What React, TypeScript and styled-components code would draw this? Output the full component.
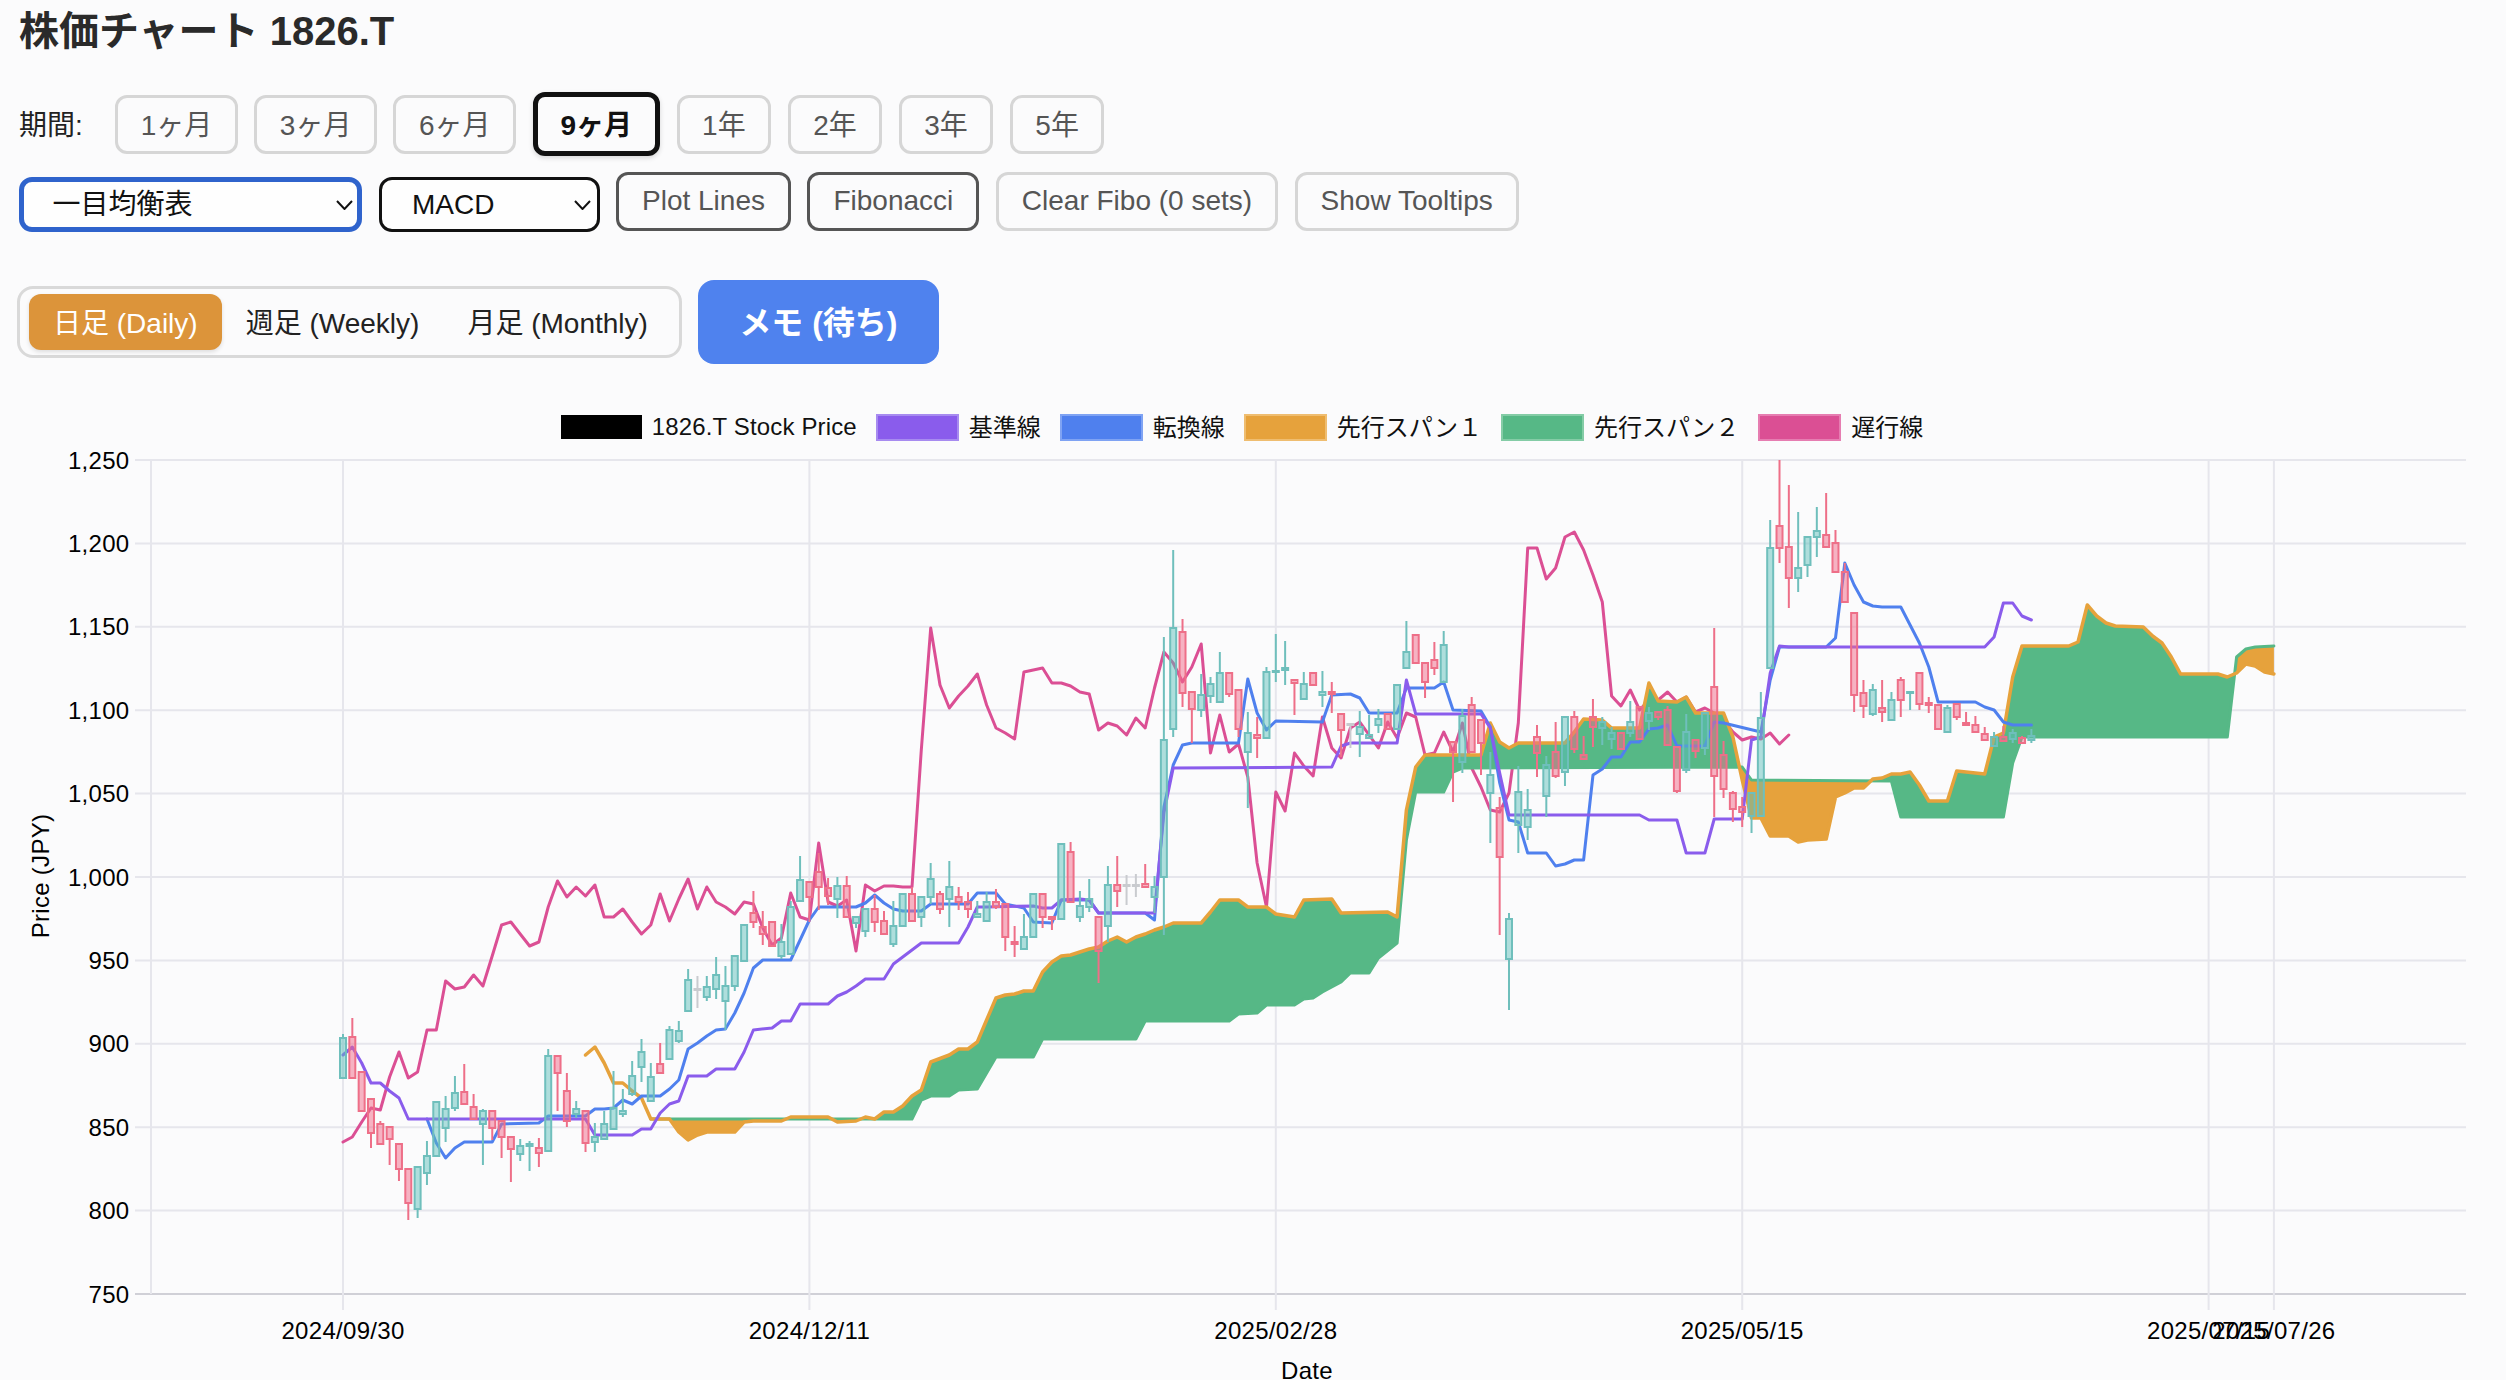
import React from 'react';
import styled, { createGlobalStyle } from 'styled-components';

const FONT = `"Liberation Sans", "Noto Sans CJK JP", sans-serif`;

const GlobalStyle = createGlobalStyle`
  html, body {
    margin: 0;
    height: 1380px;
    overflow: hidden;
    background: #fbfbfc;
    font-family: ${FONT};
  }
`;

const Page = styled.div`
  width: 2506px;
  height: 1380px;
  overflow: hidden;
`;

const Controls = styled.section`
  padding-left: 19px;
`;

const Title = styled.h1`
  margin: 0;
  height: 60px;
  font-size: 40px;
  line-height: 62px;
  font-weight: 700;
  color: #2a2a2a;
`;

const PeriodRow = styled.div`
  display: flex;
  align-items: center;
  gap: 16.5px;
  height: 64px;
  margin-top: 32px;
`;

const PeriodLabel = styled.span`
  font-size: 28px;
  color: #222;
  margin-right: 16px;
  padding-bottom: 3px;
`;

const Button = styled.button<{ $active?: boolean; $strong?: boolean }>`
  box-sizing: border-box;
  height: ${(p) => (p.$active ? '64px' : '59px')};
  padding: 0 ${(p) => (p.$active ? '23px' : '22.5px')} 3px;
  background: transparent;
  border: ${(p) => (p.$active ? '5px solid #111' : p.$strong ? '3px solid #555' : '3px solid #d6d6d6')};
  border-radius: 12px;
  box-shadow: ${(p) => (p.$active ? '0 2px 5px rgba(0,0,0,.15)' : 'none')};
  font-family: ${FONT};
  font-size: 28px;
  font-weight: ${(p) => (p.$active ? 700 : 400)};
  color: ${(p) => (p.$active ? '#111' : '#555')};
  white-space: nowrap;
`;

const ToolButton = styled(Button)`
  padding: 0 23px 2px;
`;

const ToolRow = styled.div`
  display: flex;
  align-items: flex-start;
  gap: 16.5px;
  height: 60px;
  margin-top: 16px;
`;

const SelectWrap = styled.div<{ $width: number }>`
  position: relative;
  width: ${(p) => p.$width}px;
  height: 55px;
  margin-top: 5px;
`;

const Select = styled.select<{ $focused?: boolean }>`
  appearance: none;
  box-sizing: border-box;
  width: 100%;
  height: 100%;
  padding: 0 0 0 ${(p) => (p.$focused ? '28.5px' : '30.5px')};
  background: #fefefe;
  border: ${(p) => (p.$focused ? '5px solid #2f63cc' : '3px solid #111')};
  border-radius: 13px;
  font-family: ${FONT};
  font-size: 28px;
  color: #111;
  outline: none;
`;

const Chevron = styled.svg`
  position: absolute;
  top: 23px;
  right: 9px;
  pointer-events: none;
`;

const ChartModeRow = styled.div`
  display: flex;
  align-items: center;
  gap: 16px;
  height: 84px;
  margin: 48px 0 0 -2px;
`;

const Segment = styled.div`
  box-sizing: border-box;
  display: flex;
  height: 72px;
  padding: 5px 7px 5px 9px;
  border: 3px solid #d9d9d9;
  border-radius: 16px;
`;

const SegmentOption = styled.div<{ $active?: boolean }>`
  display: flex;
  align-items: center;
  padding: 0 24px 3px;
  border-radius: 12px;
  background: ${(p) => (p.$active ? '#dc943a' : 'transparent')};
  box-shadow: ${(p) => (p.$active ? '0 2px 4px rgba(0,0,0,.12)' : 'none')};
  font-size: 28px;
  color: ${(p) => (p.$active ? '#fff' : '#222')};
  white-space: nowrap;
`;

const MemoButton = styled.button`
  width: 241px;
  height: 84px;
  padding: 0 0 5px;
  border: none;
  border-radius: 16px;
  background: #4f82ee;
  font-family: ${FONT};
  font-size: 32px;
  font-weight: 700;
  color: #fff;
`;

const Legend = styled.div`
  display: flex;
  align-items: center;
  justify-content: center;
  gap: 19px;
  width: 2484px;
  height: 28px;
  margin-top: 49px;
  margin-bottom: 1px;
`;

const LegendItem = styled.div`
  display: flex;
  align-items: center;
  gap: 10px;
  font-size: 24px;
  color: #111;
  white-space: nowrap;
`;

const LegendText = styled.span<{ $latin?: boolean }>`
  padding-bottom: ${(p) => (p.$latin ? '0' : '3px')};
  letter-spacing: ${(p) => (p.$latin ? '0.15px' : '0')};
`;

const Swatch = styled.span<{ $fill: string; $edge: string }>`
  box-sizing: border-box;
  width: ${(p) => (p.$fill === '#000000' ? '81px' : '83px')};
  height: ${(p) => (p.$fill === '#000000' ? '24px' : '27px')};
  background: ${(p) => p.$fill};
  border: 2px solid ${(p) => p.$edge};
`;

const ChartSvg = styled.svg`
  display: block;
`;

const AxisText = styled.text`
  font-family: ${FONT};
  font-size: 24px;
  letter-spacing: 0.3px;
  fill: #000;
  dominant-baseline: central;
`;

const GridLine = styled.line<{ $axis?: boolean }>`
  stroke: ${(p) => (p.$axis ? '#d0d0d7' : '#e6e6ec')};
  stroke-width: 2;
`;

const SeriesLine = styled.path<{ $color: string; $width?: number }>`
  fill: none;
  stroke: ${(p) => p.$color};
  stroke-width: ${(p) => p.$width ?? 3};
  stroke-linejoin: round;
  stroke-linecap: round;
`;

const PLOT = { left: 151, right: 2466, top: 460, bottom: 1294 };
const ix = (i: number) => 343 + i * 9.328;

const COLORS = {
  kijun: '#8a5cec',
  tenkan: '#4f80ee',
  span1: '#e6a23c',
  span2: '#56b886',
  chikou: '#db4f94',
};

type Knot = [number, number];

const CHIKOU: number[] = [
  1142, 1137, 1122, 1108, 1110, 1077, 1052, 1078, 1072, 1030, 1030, 981, 989, 987, 975, 986, 956, 925, 922, 934,
  946, 942, 907, 881, 897, 887, 896, 885, 917, 917, 909, 922, 934, 925, 894, 921, 899, 879, 909, 887,
  902, 907, 914, 902, 904, 928, 945, 938, 893, 917, 920, 843, 902, 906, 900, 951, 885, 891, 886, 886,
  887, 887, 750, 628, 685, 708, 696, 686, 674, 705, 728, 733, 739, 672, 670, 668, 683, 683, 686, 692,
  694, 730, 723, 726, 735, 718, 728, 688, 652, 663, 682, 667, 644, 753, 715, 752, 744, 777, 863, 907,
  792, 811, 753, 766, 776, 717, 748, 758, 728, 722, 735, 748, 722, 738, 713, 717, 755, 753, 732, 752,
  723, 768, 787, 810, 812, 793, 723, 548, 548, 579, 568, 537, 532, 550, 575, 602, 696, 706, 690, 710,
  700, 700, 692, 702, 697, 712, 708, 713, 720, 732, 740, 737, 739, 733, 744, 735,
];

const KIJUN: Knot[] = [
  [0, 1055], [1, 1047], [2, 1063], [3, 1083], [4, 1083], [5, 1091], [6, 1098], [7, 1119], [26, 1119], [27, 1135],
  [31, 1135], [32, 1129], [33, 1129], [34, 1113], [35, 1104], [36, 1101], [37, 1076], [39, 1076], [40, 1069], [42, 1069],
  [43, 1052], [44, 1030], [46, 1028], [47, 1021], [48, 1021], [49, 1004], [52, 1004], [53, 996], [54, 992], [55, 986],
  [56, 979], [58, 979], [59, 964], [60, 957], [61, 950], [62, 943], [66, 943], [67, 927], [68, 907], [69, 907],
  [74, 906], [75, 908], [76, 908], [77, 900], [79, 899], [80, 900], [81, 913], [87, 913], [88, 813], [89, 768],
  [106, 767], [107, 746], [108, 743], [113, 743], [114, 680], [115, 714], [122, 714], [123, 728], [124, 773], [125, 815],
  [139, 815], [140, 820], [143, 820], [144, 853], [146, 853], [147, 819], [150, 819], [151, 740], [152, 737], [153, 673],
  [154, 646], [155, 647], [176, 647], [177, 637], [178, 603], [179, 603], [180, 616], [181, 620],
];

const TENKAN: Knot[] = [
  [9, 1119], [10, 1143], [11, 1158], [12, 1148], [13, 1142], [16, 1142], [17, 1124], [21, 1123], [22, 1116], [26, 1116],
  [27, 1109], [28, 1109], [29, 1108], [30, 1100], [31, 1104], [32, 1096], [34, 1096], [35, 1089], [36, 1080], [37, 1049],
  [38, 1043], [39, 1036], [40, 1030], [41, 1029], [42, 1013], [43, 993], [44, 968], [45, 960], [48, 960], [49, 940],
  [50, 920], [51, 907], [55, 907], [56, 903], [57, 895], [58, 903], [59, 909], [60, 911], [62, 911], [63, 904],
  [67, 904], [68, 893], [70, 893], [71, 904], [73, 908], [74, 922], [76, 923], [77, 900], [80, 900], [81, 913],
  [86, 913], [87, 920], [88, 807], [89, 765], [90, 745], [91, 743], [96, 743], [97, 679], [98, 713], [99, 730],
  [100, 721], [105, 722], [106, 695], [108, 694], [109, 698], [110, 713], [113, 713], [114, 688], [117, 688], [118, 682],
  [119, 710], [122, 711], [123, 727], [124, 783], [125, 820], [126, 822], [127, 853], [129, 853], [130, 866], [131, 864],
  [132, 860], [133, 860], [134, 775], [135, 769], [136, 757], [137, 757], [138, 742], [139, 742], [140, 729], [141, 728],
  [142, 725], [143, 746], [146, 746], [147, 722], [148, 723], [152, 732], [153, 680], [154, 647], [159, 647], [160, 638],
  [161, 563], [162, 585], [163, 602], [164, 606], [165, 607], [167, 607], [168, 625], [169, 643], [170, 667], [171, 702],
  [175, 702], [176, 707], [177, 710], [178, 722], [179, 725], [181, 725],
];

const SPAN1: Knot[] = [
  [26, 1055], [27, 1047], [28, 1063], [29, 1083], [30, 1083], [31, 1091], [32, 1098], [33, 1119], [35, 1119], [36, 1132],
  [37, 1140], [38, 1135], [39, 1132], [42, 1132], [43, 1122], [44, 1121], [47, 1121], [48, 1117], [52, 1117], [53, 1122],
  [55, 1121], [56, 1117], [57, 1119], [58, 1112], [59, 1112], [60, 1106], [61, 1096], [62, 1090], [63, 1062], [65, 1055],
  [66, 1049], [67, 1049], [68, 1042], [69, 1020], [70, 998], [71, 995], [72, 994], [73, 991], [74, 991], [75, 972],
  [76, 962], [77, 956], [78, 955], [79, 952], [80, 949], [81, 947], [82, 941], [83, 937], [84, 942], [85, 937],
  [86, 934], [87, 930], [88, 927], [89, 923], [92, 923], [93, 912], [94, 900], [96, 900], [97, 907], [99, 907],
  [100, 914], [102, 917], [103, 900], [106, 899], [107, 913], [112, 912], [113, 917], [114, 810], [115, 767], [116, 755],
  [122, 755], [123, 723], [124, 742], [125, 748], [126, 743], [131, 743], [132, 732], [133, 719], [135, 720], [136, 728],
  [139, 728], [140, 683], [141, 701], [143, 702], [144, 697], [145, 713], [148, 713], [149, 737], [150, 780], [151, 818],
  [152, 818], [153, 836], [155, 836], [156, 842], [157, 840], [159, 839], [160, 797], [161, 793], [162, 788], [163, 788],
  [164, 779], [165, 778], [166, 774], [167, 774], [168, 772], [169, 785], [170, 801], [172, 801], [173, 771], [175, 773],
  [176, 774], [177, 737], [178, 733], [179, 677], [180, 646], [185, 646], [186, 642], [187, 605], [188, 616], [189, 623],
  [190, 626], [193, 627], [194, 636], [195, 643], [196, 657], [197, 674], [201, 674], [202, 677], [203, 673], [204, 664],
  [205, 666], [206, 672], [207, 674],
];

const SPAN2: Knot[] = [
  [33, 1119], [61, 1119], [62, 1100], [63, 1096], [65, 1096], [66, 1090], [68, 1089], [70, 1057], [74, 1057], [75, 1039],
  [85, 1039], [86, 1021], [95, 1021], [96, 1014], [98, 1013], [99, 1005], [102, 1005], [103, 999], [104, 998], [105, 992],
  [107, 982], [108, 973], [110, 973], [111, 958], [113, 943], [114, 840], [115, 792], [118, 792], [119, 772], [120, 768],
  [150, 767], [151, 780], [166, 781], [167, 817], [178, 817], [179, 763], [180, 737], [202, 737], [203, 657], [204, 649],
  [205, 647], [207, 646],
];

type Kind = 'u' | 'd' | 'n';
type Candle = [number, number, number, number, Kind];

const CANDLES: Candle[] = [
  [1038, 1078, 1034, 1078, 'u'], [1037, 1078, 1018, 1078, 'd'], [1072, 1111, 1072, 1111, 'd'], [1099, 1133, 1099, 1148, 'd'],
  [1124, 1144, 1121, 1144, 'd'], [1127, 1139, 1127, 1165, 'd'], [1144, 1169, 1144, 1181, 'd'], [1169, 1203, 1169, 1220, 'd'],
  [1167, 1209, 1167, 1218, 'u'], [1156, 1173, 1141, 1185, 'u'], [1102, 1156, 1101, 1156, 'u'], [1109, 1128, 1096, 1142, 'u'],
  [1093, 1108, 1076, 1111, 'u'], [1092, 1104, 1064, 1104, 'd'], [1107, 1119, 1094, 1119, 'd'], [1111, 1124, 1109, 1165, 'u'],
  [1111, 1128, 1111, 1140, 'd'], [1121, 1137, 1121, 1158, 'd'], [1137, 1149, 1137, 1182, 'd'], [1146, 1154, 1139, 1161, 'u'],
  [1144, 1146, 1141, 1171, 'u'], [1148, 1153, 1138, 1167, 'd'], [1056, 1151, 1049, 1151, 'u'], [1056, 1073, 1056, 1111, 'd'],
  [1091, 1121, 1073, 1127, 'd'], [1109, 1114, 1101, 1118, 'u'], [1111, 1143, 1111, 1152, 'd'], [1137, 1142, 1123, 1152, 'u'],
  [1124, 1139, 1111, 1139, 'u'], [1108, 1129, 1071, 1129, 'u'], [1111, 1114, 1089, 1117, 'u'], [1076, 1094, 1061, 1096, 'u'],
  [1052, 1067, 1039, 1082, 'u'], [1077, 1101, 1063, 1102, 'u'], [1064, 1073, 1043, 1073, 'd'], [1030, 1059, 1026, 1059, 'u'],
  [1031, 1041, 1021, 1043, 'u'], [980, 1011, 969, 1011, 'u'], [989, 989, 976, 1008, 'n'], [987, 997, 976, 1001, 'u'],
  [975, 989, 957, 999, 'u'], [986, 1001, 966, 1030, 'u'], [956, 986, 956, 991, 'u'], [925, 961, 925, 961, 'u'],
  [913, 922, 891, 928, 'd'], [927, 934, 911, 945, 'd'], [922, 946, 922, 946, 'd'], [942, 956, 924, 959, 'u'],
  [907, 954, 901, 954, 'u'], [880, 901, 856, 901, 'u'], [882, 897, 882, 922, 'd'], [872, 887, 853, 910, 'd'],
  [888, 896, 878, 905, 'd'], [886, 899, 877, 918, 'u'], [886, 917, 876, 917, 'd'], [917, 923, 917, 928, 'u'],
  [909, 931, 909, 937, 'u'], [909, 922, 895, 932, 'd'], [921, 934, 911, 934, 'd'], [926, 944, 901, 947, 'u'],
  [894, 926, 894, 926, 'u'], [894, 921, 887, 921, 'd'], [897, 917, 897, 927, 'u'], [879, 897, 863, 904, 'u'],
  [894, 909, 891, 914, 'd'], [887, 899, 861, 927, 'u'], [897, 902, 887, 910, 'd'], [902, 909, 892, 918, 'd'],
  [914, 917, 901, 918, 'u'], [902, 921, 892, 922, 'u'], [902, 907, 889, 909, 'd'], [904, 937, 904, 951, 'd'],
  [942, 944, 926, 957, 'd'], [937, 949, 914, 949, 'u'], [894, 937, 893, 937, 'u'], [894, 917, 894, 928, 'd'],
  [917, 919, 917, 930, 'd'], [844, 919, 844, 919, 'u'], [852, 902, 842, 902, 'd'], [906, 917, 891, 922, 'u'],
  [899, 907, 879, 912, 'u'], [917, 951, 917, 983, 'd'], [885, 926, 866, 942, 'u'], [885, 891, 856, 907, 'd'],
  [885, 885, 875, 905, 'n'], [885, 885, 874, 897, 'n'], [884, 887, 864, 887, 'd'], [887, 897, 876, 913, 'u'],
  [740, 877, 637, 935, 'u'], [628, 729, 550, 737, 'u'], [632, 693, 619, 707, 'd'], [692, 709, 692, 743, 'd'],
  [695, 710, 674, 717, 'u'], [684, 696, 677, 703, 'u'], [673, 702, 652, 702, 'u'], [673, 694, 673, 697, 'd'],
  [690, 729, 690, 737, 'd'], [733, 752, 712, 808, 'u'], [735, 738, 717, 758, 'd'], [672, 738, 667, 738, 'u'],
  [671, 672, 634, 682, 'u'], [668, 670, 641, 685, 'u'], [680, 683, 680, 715, 'd'], [684, 699, 672, 699, 'u'],
  [673, 685, 673, 685, 'd'], [692, 695, 671, 707, 'u'], [692, 694, 682, 713, 'd'], [714, 730, 714, 757, 'd'],
  [724, 724, 724, 748, 'n'], [727, 734, 711, 757, 'u'], [735, 738, 715, 738, 'u'], [719, 725, 709, 733, 'u'],
  [714, 729, 714, 729, 'd'], [685, 729, 685, 729, 'u'], [652, 668, 621, 668, 'u'], [635, 663, 635, 663, 'd'],
  [663, 682, 663, 698, 'd'], [660, 668, 642, 675, 'd'], [645, 682, 631, 682, 'u'], [742, 752, 742, 802, 'd'],
  [716, 762, 709, 773, 'u'], [705, 752, 697, 752, 'd'], [720, 743, 720, 775, 'd'], [775, 793, 752, 843, 'u'],
  [808, 857, 797, 935, 'd'], [919, 959, 913, 1010, 'u'], [792, 825, 766, 853, 'u'], [810, 827, 789, 840, 'u'],
  [737, 753, 725, 777, 'd'], [765, 796, 756, 817, 'u'], [752, 776, 722, 778, 'd'], [717, 772, 717, 786, 'u'],
  [717, 749, 711, 753, 'd'], [755, 759, 736, 759, 'd'], [717, 727, 699, 747, 'd'], [722, 728, 717, 745, 'u'],
  [733, 739, 727, 749, 'u'], [733, 749, 733, 749, 'd'], [722, 733, 701, 737, 'u'], [707, 739, 707, 739, 'd'],
  [713, 721, 707, 730, 'u'], [712, 717, 712, 720, 'd'], [710, 745, 706, 745, 'd'], [747, 791, 747, 793, 'd'],
  [732, 770, 714, 773, 'u'], [740, 751, 740, 758, 'd'], [713, 748, 713, 755, 'u'], [687, 776, 628, 817, 'd'],
  [755, 789, 741, 798, 'd'], [793, 809, 791, 822, 'd'], [807, 812, 797, 827, 'd'], [793, 816, 793, 833, 'u'],
  [718, 816, 692, 816, 'u'], [548, 668, 520, 668, 'u'], [526, 548, 460, 563, 'd'], [547, 578, 485, 608, 'd'],
  [568, 578, 512, 592, 'u'], [537, 565, 537, 577, 'u'], [531, 537, 507, 557, 'u'], [535, 547, 493, 547, 'd'],
  [543, 572, 530, 572, 'd'], [572, 602, 563, 602, 'd'], [613, 695, 613, 712, 'd'], [693, 706, 680, 718, 'd'],
  [690, 714, 684, 716, 'u'], [708, 712, 680, 722, 'd'], [700, 720, 692, 721, 'u'], [680, 700, 677, 717, 'd'],
  [692, 693, 692, 710, 'u'], [673, 704, 673, 710, 'd'], [703, 705, 697, 713, 'd'], [705, 729, 705, 729, 'd'],
  [708, 732, 705, 732, 'u'], [704, 717, 704, 720, 'd'], [723, 725, 712, 725, 'd'], [725, 732, 716, 732, 'd'],
  [734, 740, 727, 740, 'd'], [737, 746, 732, 746, 'u'], [737, 741, 726, 741, 'd'], [733, 739, 729, 743, 'u'],
  [738, 743, 736, 743, 'd'], [736, 740, 729, 743, 'u'],
];

const CANDLE_STYLE: Record<Kind, { fill: string; stroke: string }> = {
  u: { fill: 'rgba(90,190,185,0.48)', stroke: '#6fbfbc' },
  d: { fill: 'rgba(242,105,135,0.5)', stroke: '#ee6f88' },
  n: { fill: 'rgba(201,203,207,0.5)', stroke: '#c9cbcf' },
};

const pathOf = (pts: Knot[]) => pts.map(([i, y], n) => `${n ? 'L' : 'M'}${ix(i).toFixed(1)} ${y}`).join('');

const yAt = (knots: Knot[], i: number) => {
  for (let k = 1; k < knots.length; k++) {
    const [a, ya] = knots[k - 1];
    const [b, yb] = knots[k];
    if (i >= a && i <= b) return ya + ((yb - ya) * (i - a)) / (b - a);
  }
  return knots[knots.length - 1][1];
};

// cloud between the two spans: one polygon per run, split where the spans cross
const cloudRegions = () => {
  const runs: { above: boolean; top: Knot[]; bottom: Knot[] }[] = [];
  let run: { above: boolean; top: Knot[]; bottom: Knot[] } | null = null;
  for (let i = 33; i <= 207; i++) {
    const a = yAt(SPAN1, i);
    const b = yAt(SPAN2, i);
    if (a !== b) {
      const above = a < b;
      if (!run || run.above !== above) {
        let start = i;
        if (i > 33) {
          const pa = yAt(SPAN1, i - 1);
          const pb = yAt(SPAN2, i - 1);
          start = i - 1 + (pa - pb) / (pa - pb - (a - b));
          if (run) {
            run.top.push([start, yAt(SPAN1, start)]);
            run.bottom.push([start, yAt(SPAN1, start)]);
          }
        }
        run = { above, top: [[start, yAt(SPAN1, start)]], bottom: [[start, yAt(SPAN1, start)]] };
        runs.push(run);
      }
    }
    if (run) {
      run.top.push([i, a]);
      run.bottom.push([i, b]);
    }
  }
  return runs.map((r) => ({
    color: r.above ? COLORS.span2 : COLORS.span1,
    d: `${pathOf(r.top)}L${r.bottom
      .slice()
      .reverse()
      .map(([i, y]) => `${ix(i).toFixed(1)} ${y}`)
      .join('L')}Z`,
  }));
};

const PERIODS = ['1ヶ月', '3ヶ月', '6ヶ月', '9ヶ月', '1年', '2年', '3年', '5年'];
const LEGEND = [
  { label: '1826.T Stock Price', fill: '#000000', edge: '#000000', latin: true },
  { label: '基準線', fill: COLORS.kijun, edge: '#a78bf0' },
  { label: '転換線', fill: COLORS.tenkan, edge: '#7fa3f3' },
  { label: '先行スパン１', fill: COLORS.span1, edge: '#efbd70' },
  { label: '先行スパン２', fill: COLORS.span2, edge: '#84cca6' },
  { label: '遅行線', fill: COLORS.chikou, edge: '#e67db1' },
];
const Y_TICKS = ['1,250', '1,200', '1,150', '1,100', '1,050', '1,000', '950', '900', '850', '800', '750'];
const X_TICKS: [number, string][] = [
  [0, '2024/09/30'],
  [50, '2024/12/11'],
  [100, '2025/02/28'],
  [150, '2025/05/15'],
  [200, '2025/07/15'],
  [207, '2025/07/26'],
];

const SelectBox = ({ width, focused, options }: { width: number; focused?: boolean; options: string[] }) => (
  <SelectWrap $width={width}>
    <Select $focused={focused} defaultValue={options[0]}>
      {options.map((o) => (
        <option key={o}>{o}</option>
      ))}
    </Select>
    <Chevron width="17" height="10" viewBox="0 0 17 10">
      <path d="M1 1l7.5 8L16 1" fill="none" stroke="#111" strokeWidth="2" />
    </Chevron>
  </SelectWrap>
);

const PriceChart = () => {
  const yStep = (PLOT.bottom - PLOT.top) / 10;
  const chikou = CHIKOU.map((y, i): Knot => [i, y]);
  return (
    <ChartSvg width="2506" height="938" viewBox="0 442 2506 938">
      {Y_TICKS.map((label, n) => {
        const y = PLOT.top + n * yStep;
        return (
          <g key={label}>
            <GridLine x1={135} x2={PLOT.right} y1={y} y2={y} $axis={n === 10} />
            <AxisText x={129.5} y={y} textAnchor="end">
              {label}
            </AxisText>
          </g>
        );
      })}
      <GridLine x1={PLOT.left} x2={PLOT.left} y1={PLOT.top} y2={PLOT.bottom} />
      {X_TICKS.map(([i, label]) => (
        <g key={label}>
          <GridLine x1={ix(i)} x2={ix(i)} y1={PLOT.top} y2={1310} />
          <AxisText x={ix(i)} y={1330} textAnchor="middle">
            {label}
          </AxisText>
        </g>
      ))}
      <AxisText x={1307} y={1370} textAnchor="middle">
        Date
      </AxisText>
      <AxisText x={40} y={876} textAnchor="middle" transform="rotate(-90 40 876)">
        Price (JPY)
      </AxisText>

      <SeriesLine d={pathOf(chikou)} $color={COLORS.chikou} />
      {cloudRegions().map((r) => (
        <path key={r.d} d={r.d} fill={r.color} />
      ))}
      <SeriesLine d={pathOf(SPAN2)} $color={COLORS.span2} />
      <SeriesLine d={pathOf(SPAN1)} $color={COLORS.span1} $width={3.5} />
      <SeriesLine d={pathOf(TENKAN)} $color={COLORS.tenkan} />
      <SeriesLine d={pathOf(KIJUN)} $color={COLORS.kijun} />

      {CANDLES.map(([top, bottom, wickTop, wickBottom, kind], i) => {
        const { fill, stroke } = CANDLE_STYLE[kind];
        const x = ix(i);
        return (
          <g key={i} stroke={stroke} strokeWidth="2">
            <line x1={x} x2={x} y1={wickTop} y2={top} />
            <line x1={x} x2={x} y1={bottom} y2={wickBottom} />
            <rect x={x - 3} y={top} width="6" height={Math.max(bottom - top, 1)} fill={fill} />
          </g>
        );
      })}
    </ChartSvg>
  );
};

export default function App() {
  return (
    <Page>
      <GlobalStyle />
      <Controls>
        <Title>株価チャート 1826.T</Title>
        <PeriodRow>
          <PeriodLabel>期間:</PeriodLabel>
          {PERIODS.map((p) => (
            <Button key={p} $active={p === '9ヶ月'}>
              {p}
            </Button>
          ))}
        </PeriodRow>
        <ToolRow>
          <SelectBox width={343} focused options={['一目均衡表', 'ボリンジャーバンド', '移動平均']} />
          <SelectBox width={221} options={['MACD', 'RSI', 'なし']} />
          <ToolButton $strong>Plot Lines</ToolButton>
          <ToolButton $strong>Fibonacci</ToolButton>
          <ToolButton>Clear Fibo (0 sets)</ToolButton>
          <ToolButton>Show Tooltips</ToolButton>
        </ToolRow>
        <ChartModeRow>
          <Segment>
            <SegmentOption $active>日足 (Daily)</SegmentOption>
            <SegmentOption>週足 (Weekly)</SegmentOption>
            <SegmentOption>月足 (Monthly)</SegmentOption>
          </Segment>
          <MemoButton>メモ (待ち)</MemoButton>
        </ChartModeRow>
      </Controls>
      <Legend>
        {LEGEND.map((l) => (
          <LegendItem key={l.label}>
            <Swatch $fill={l.fill} $edge={l.edge} />
            <LegendText $latin={l.latin}>{l.label}</LegendText>
          </LegendItem>
        ))}
      </Legend>
      <PriceChart />
    </Page>
  );
}
